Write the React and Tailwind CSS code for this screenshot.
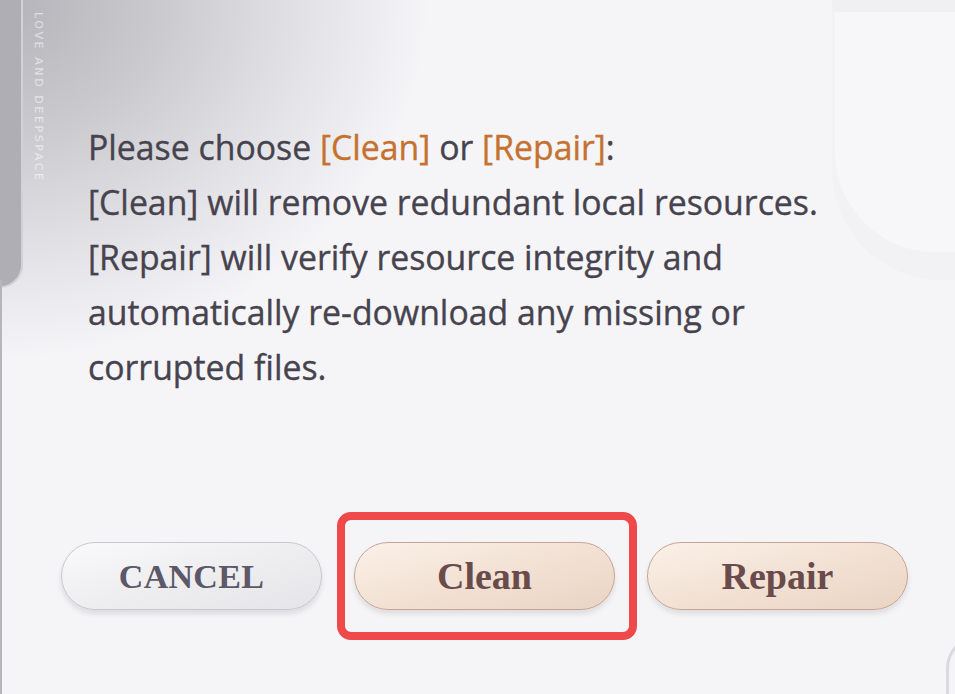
export default function App() {
  const hl = 'text-[#c5712f]';
  return (
    <div className="relative w-[955px] h-[694px] overflow-hidden bg-[#f5f5f8] font-['Open_Sans',sans-serif]">
      {/* background decor */}
      <div className="absolute inset-0 bg-[radial-gradient(ellipse_430px_360px_at_0_0,#b4b3b9_0%,#c9c8cd_35%,#e2e2e6_70%,#f5f5f8_100%)]" />
      <div className="absolute left-0 top-0 w-[23px] h-[288px] bg-[#afaeb4] border-r-[2px] border-b-[2px] border-[#d2d2d6] rounded-br-[44px]" />
      <div className="absolute left-0 top-[280px] w-[2px] h-[414px] bg-[#b5b5ba]" />
      <div className="absolute left-[29px] top-[12px] [writing-mode:vertical-rl] text-[11px] tracking-[2.6px] text-white/55 font-['DejaVu_Sans',sans-serif]">
        LOVE AND DEEPSPACE
      </div>
      <div className="absolute left-[832px] top-0 w-[140px] h-[280px] bg-[#f2f2f5] rounded-bl-[110px] border-t-[12px] border-[#f0f0f3]" />
      <div className="absolute left-[835px] top-[12px] w-[140px] h-[240px] bg-[#f7f7f9] rounded-bl-[100px]" />
      <div className="absolute left-[946px] top-[636px] w-[40px] h-[90px] border-l-[3px] border-t-[3px] border-[#d9d9de] rounded-tl-[32px]" />

      {/* content */}
      <div className="relative flex flex-col">
        <div className="pl-[88px] pt-[120px] text-[33.8px] leading-[55px] text-[#47434e] [-webkit-text-stroke:0.35px_#47434e]">
          <p>
            Please choose <span className={`${hl} [-webkit-text-stroke:0.35px_#c5712f]`}>[Clean]</span> or{' '}
            <span className={`${hl} [-webkit-text-stroke:0.35px_#c5712f]`}>[Repair]</span>:
          </p>
          <p>[Clean] will remove redundant local resources.</p>
          <p>[Repair] will verify resource integrity and</p>
          <p>automatically re-download any missing or</p>
          <p>corrupted files.</p>
        </div>

        <div className="mt-[147px] ml-[61px] flex gap-[32px] font-['Liberation_Serif',serif] font-bold">
          <button className="w-[261px] h-[68px] rounded-full border-[1.5px] border-[#c6c9cf] bg-[linear-gradient(165deg,#fafafb_0%,#efeff1_45%,#e5e5e9_100%)] shadow-[0_4px_5px_rgba(60,60,80,0.13)] text-[34px] text-[#5c5867] tracking-[0.3px]">
            CANCEL
          </button>
          <button className="relative w-[261px] h-[68px] rounded-full border-[1.5px] border-[#c7a596] bg-[linear-gradient(165deg,#fbf1e8_0%,#f3e3d6_45%,#ead4c3_100%)] shadow-[0_4px_5px_rgba(80,60,60,0.13)] text-[38px] text-[#6a4b4c]">
            Clean
            <span className="absolute left-[-18px] top-[-31px] w-[300px] h-[128px] rounded-[14px] border-[8px] border-[#f0494a]" />
          </button>
          <button className="w-[261px] h-[68px] rounded-full border-[1.5px] border-[#c7a596] bg-[linear-gradient(165deg,#fbf1e8_0%,#f3e3d6_45%,#ead4c3_100%)] shadow-[0_4px_5px_rgba(80,60,60,0.13)] text-[38px] text-[#6a4b4c]">
            Repair
          </button>
        </div>
      </div>
    </div>
  );
}
